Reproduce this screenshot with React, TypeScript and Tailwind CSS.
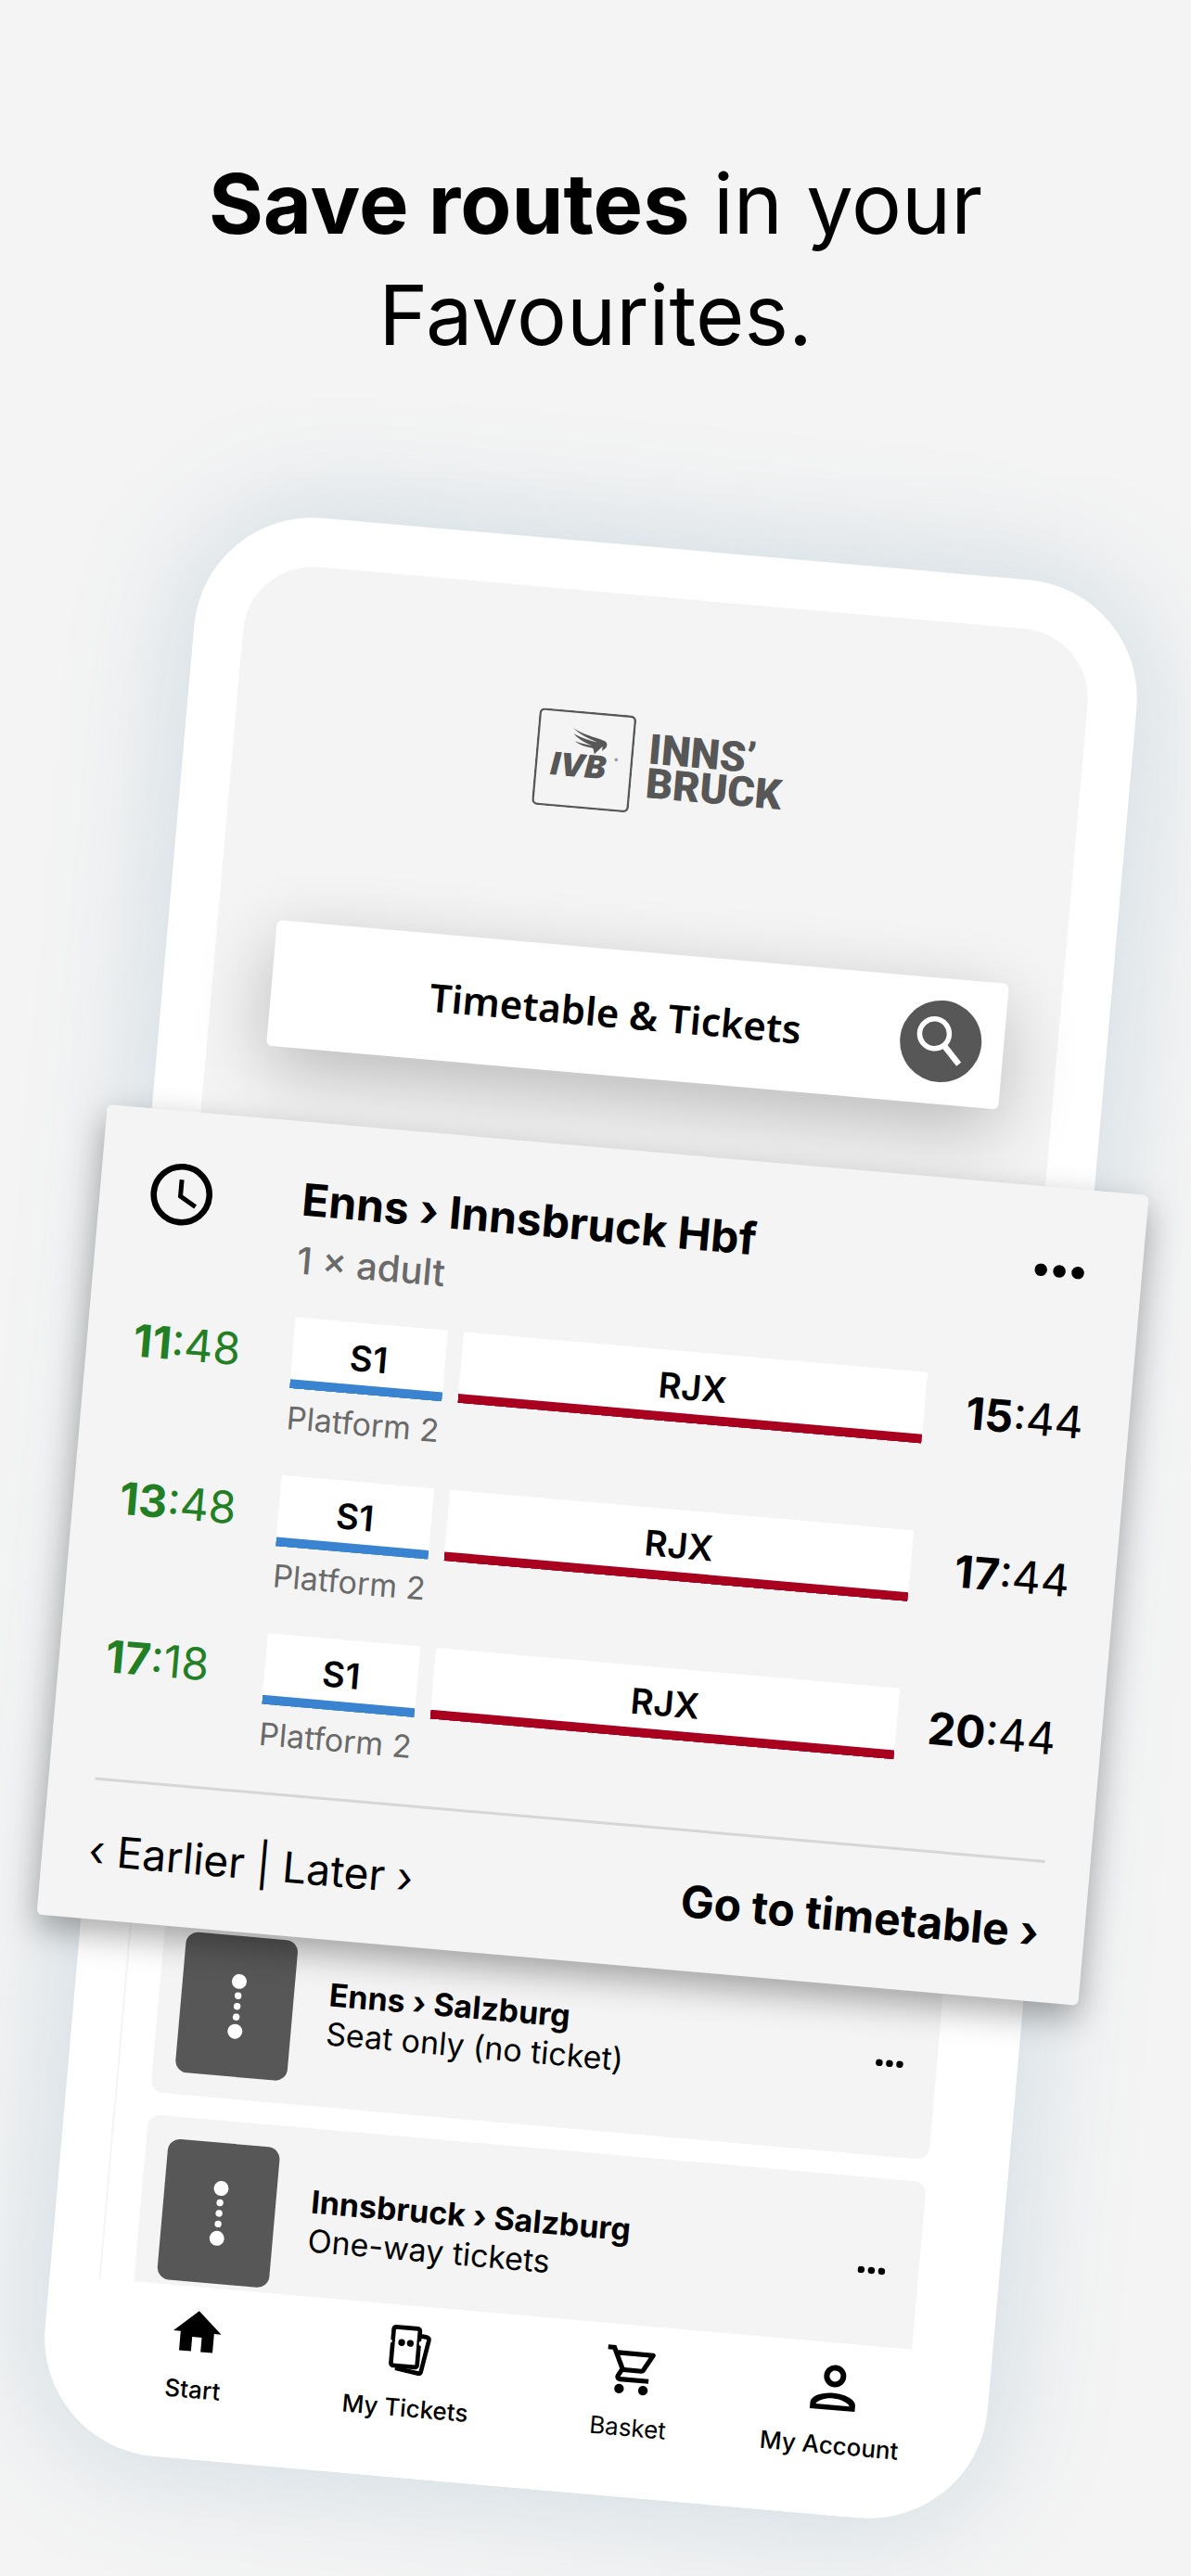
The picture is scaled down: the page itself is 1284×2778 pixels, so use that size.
import React from 'react';
import { MdHome, MdOutlineShoppingCart } from 'react-icons/md';

interface Connection {
  departure: string;
  arrival: string;
  platform: string;
}

interface Favourite {
  route: string;
  detail: string;
}

const CONNECTIONS: Connection[] = [
  { departure: '11:48', arrival: '15:44', platform: 'Platform 2' },
  { departure: '13:48', arrival: '17:44', platform: 'Platform 2' },
  { departure: '17:18', arrival: '20:44', platform: 'Platform 2' },
];

const FAVOURITES: Favourite[] = [
  { route: 'Enns › Salzburg', detail: 'Seat only (no ticket)' },
  { route: 'Innsbruck › Salzburg', detail: 'One-way tickets' },
];

const Time: React.FC<{ value: string; className: string }> = ({ value, className }) => {
  const [hours, minutes] = value.split(':');
  return (
    <time className={`text-[48px] leading-[79px] ${className}`}>
      <span className="font-bold">{hours}</span>:{minutes}
    </time>
  );
};

const DotsIcon: React.FC<{ className: string }> = ({ className }) => (
  <svg viewBox="0 0 54 14" className={className} fill="currentColor" aria-hidden="true">
    <circle cx="7" cy="7" r="6.8" />
    <circle cx="27" cy="7" r="6.8" />
    <circle cx="47" cy="7" r="6.8" />
  </svg>
);

const ClockIcon = () => (
  <svg viewBox="0 0 76 76" className="w-[76px] h-[76px]" fill="none" stroke="currentColor" aria-hidden="true">
    <circle cx="38" cy="38" r="30" strokeWidth="6.6" />
    <path d="M37 22v18l17 10" strokeWidth="5" />
  </svg>
);

const SearchIcon = () => (
  <svg viewBox="0 0 88 88" className="w-full h-full" fill="none" stroke="white" aria-hidden="true">
    <circle cx="36.5" cy="36.5" r="16" strokeWidth="5.5" />
    <path d="M49 49.5l16.5 17.5" strokeWidth="6.5" />
  </svg>
);

const RouteIcon = () => (
  <svg viewBox="0 0 20 72" className="w-5 h-[72px]" fill="white" aria-hidden="true">
    <circle cx="10" cy="9" r="8" />
    <circle cx="10" cy="24.5" r="3.7" />
    <circle cx="10" cy="36" r="3.7" />
    <circle cx="10" cy="47.5" r="3.7" />
    <circle cx="10" cy="63" r="8" />
  </svg>
);

const TicketsIcon = () => (
  <svg viewBox="0 0 186 186" className="w-[62px] h-[62px]" aria-hidden="true">
    <path
      d="M124 42l20 2q8 2 7 10l-17 103q-2 7-8 6l-76-11"
      fill="none"
      stroke="black"
      strokeWidth="14"
    />
    <rect x="35" y="19" width="85" height="125" rx="7" fill="white" stroke="black" strokeWidth="14" />
    <circle cx="27" cy="66" r="6" fill="white" />
    <circle cx="128" cy="66" r="8" fill="white" />
    <circle cx="64" cy="68" r="11" />
    <circle cx="92" cy="68" r="11" />
  </svg>
);

const AccountIcon = () => (
  <svg viewBox="0 0 186 186" className="w-[62px] h-[62px]" aria-hidden="true">
    <circle cx="93" cy="54" r="27" fill="none" stroke="black" strokeWidth="18" />
    <path
      fillRule="evenodd"
      d="M20 164v-20c0-20 36-35 73-35s73 15 73 35v20zM38 148h110c-6-12-30-22-55-22s-49 10-55 22z"
    />
  </svg>
);

const Logo = () => (
  <div className="flex items-center justify-center gap-[16px] text-[#575757]">
    <svg viewBox="0 0 105 105" className="w-[105px] h-[105px]" fill="currentColor" aria-label="IVB">
      <rect x="1.2" y="1.2" width="102.6" height="102.6" rx="5" fill="none" stroke="currentColor" strokeWidth="2.4" />
      <path d="M38 19c10 6 24 8 35 11q4 2 2 7l-4 4v-5l-8 9-2-6c-7-1-15-2-20-6 7 2 13 3 19 3-8-2-16-6-21-11 9 4 18 6 26 7-10-3-20-7-27-13z" />
      <text x="17" y="71" className="text-[34px] font-black italic">IVB</text>
      <text x="85" y="52" className="text-[6px]">®</text>
    </svg>
    <p className="font-[Roboto,sans-serif] text-[45px] leading-[37px] font-black">
      INNS’
      <br />
      BRUCK
    </p>
  </div>
);

const ConnectionRow: React.FC<{ connection: Connection }> = ({ connection }) => (
  <li className="grid grid-cols-[172px_1fr_172px]">
    <Time value={connection.departure} className="text-[#237f23]" />
    <div>
      <div className="grid grid-cols-[165fr_501fr] gap-[17px] text-center text-[38px] leading-[77px]">
        <div className="bg-white font-semibold shadow-[inset_0_-10px_0_#3a83d0]">S1</div>
        <div className="bg-white font-semibold shadow-[inset_0_-10px_0_#a90020]">RJX</div>
      </div>
      <p className="mt-3 text-[34px] leading-10 text-[#6a6a6a]">{connection.platform}</p>
    </div>
    <Time value={connection.arrival} className="text-right text-black" />
  </li>
);

const ConnectionCard = () => (
  <section className="relative z-10 mt-[78px] -ml-[101px] -mr-[112px] rounded-md bg-[#f4f4f4] pl-[50px] pr-[49px] pt-[54px] pb-[48px] shadow-[0_14px_36px_rgba(0,0,0,0.34)]">
    <header className="grid grid-cols-[168px_1fr_auto]">
      <div className="flex h-[72px] items-center">
        <ClockIcon />
      </div>
      <div>
        <h2 className="text-[48px] leading-[60px] font-bold">Enns › Innsbruck Hbf</h2>
        <p className="mt-2 text-[40px] leading-[56px] font-medium text-[#6a6a6a]">1 × adult</p>
      </div>
      <button type="button" aria-label="More options" className="mr-[13px] flex h-[72px] items-center">
        <DotsIcon className="w-[54px] h-[14px]" />
      </button>
    </header>

    <ul className="mt-[33px] flex flex-col gap-[42px]">
      {CONNECTIONS.map((connection) => (
        <ConnectionRow key={connection.departure} connection={connection} />
      ))}
    </ul>

    <footer className="mt-[42px] flex items-center justify-between border-t-[3px] border-[#d6d6d6] pt-12 leading-[54px]">
      <div className="flex whitespace-pre text-[46px]">
        <button type="button">‹ Earlier</button>
        <span> | </span>
        <button type="button">Later ›</button>
      </div>
      <a href="#timetable" className="text-[48px] font-bold">Go to timetable ›</a>
    </footer>
  </section>
);

const FavouriteItem: React.FC<{ favourite: Favourite }> = ({ favourite }) => (
  <li className="flex items-center rounded-[13px] bg-[#f4f4f4] p-6 pr-9">
    <div className="flex h-[152px] w-[121px] items-center justify-center rounded-[13px] bg-[#575757]">
      <RouteIcon />
    </div>
    <div className="ml-[38px] flex-1 text-[34px] leading-[42px]">
      <h3 className="font-bold">{favourite.route}</h3>
      <p>{favourite.detail}</p>
    </div>
    <button type="button" aria-label="More options">
      <DotsIcon className="w-[30px] h-2" />
    </button>
  </li>
);

const NavItem: React.FC<{ label: string; className: string; children: React.ReactNode }> = ({
  label,
  className,
  children,
}) => (
  <a href="#nav" className={`flex flex-col items-center gap-[15px] text-[26px] leading-8 whitespace-nowrap ${className}`}>
    {children}
    {label}
  </a>
);

const App: React.FC = () => {
  return (
    <main className="min-h-screen overflow-hidden bg-[#f4f4f4] pt-40 pb-[91px] font-[Inter,sans-serif] text-black">
      <h1 className="text-center text-[90px] leading-[120px]">
        <strong className="font-bold">Save routes</strong> in your
        <br />
        Favourites.
      </h1>

      <div className="mt-[188px] pr-[10px]">
        <div className="mx-auto w-full max-w-[1020px] rotate-5 rounded-[128px] bg-white px-[53px] pt-[53px] shadow-[0_0_130px_rgba(85,136,168,0.26)]">
          <div className="rounded-t-[75px] bg-[#f4f4f4] pt-[130px]">
            <div className="ml-16 mr-[58px]">
              <Logo />
              <div className="mt-[148px] flex items-center rounded-md bg-white py-6 pl-16 pr-6 shadow-[0_24px_80px_rgba(0,0,0,0.24)]">
                <p className="flex-1 text-center font-['Noto_Sans',sans-serif] text-[42px] leading-[52px] font-semibold">
                  Timetable &amp; Tickets
                </p>
                <button type="button" aria-label="Search" className="h-[88px] w-[88px] rounded-full bg-[#575757]">
                  <SearchIcon />
                </button>
              </div>
            </div>

            <ConnectionCard />
          </div>

          <ul className="-mt-5 flex flex-col gap-6 border-l-2 border-[#f4f4f4] bg-white pl-9 pr-[34px]">
            {FAVOURITES.map((favourite) => (
              <FavouriteItem key={favourite.route} favourite={favourite} />
            ))}
          </ul>

          <nav className="relative -mt-[19px] -ml-1 mr-[22px] grid grid-cols-[230fr_230fr_252fr_184fr] rounded-b-[75px] bg-white pt-[18px] pb-[59px]">
            <NavItem label="Start" className="font-medium">
              <MdHome className="text-[62px]" />
            </NavItem>
            <NavItem label="My Tickets" className="font-medium">
              <TicketsIcon />
            </NavItem>
            <NavItem label="Basket" className="font-normal">
              <MdOutlineShoppingCart className="text-[62px]" />
            </NavItem>
            <NavItem label="My Account" className="font-medium">
              <AccountIcon />
            </NavItem>
          </nav>
        </div>
      </div>
    </main>
  );
};

export default App;
